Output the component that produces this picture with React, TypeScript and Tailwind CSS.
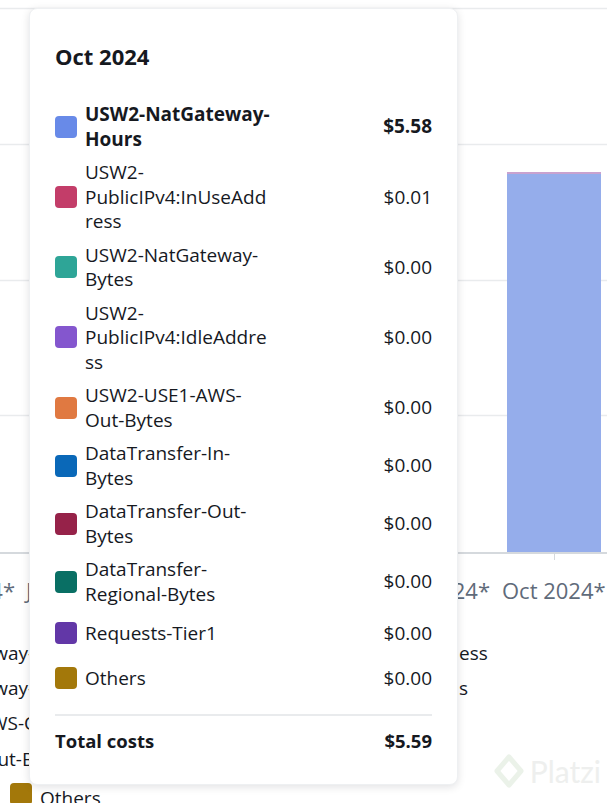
const font = { fontFamily: '"Open Sans", "Noto Sans", sans-serif' };

interface CostRow {
  lines: string[];
  color: string;
  value: string;
  bold?: boolean;
}

const rows: CostRow[] = [
  { lines: ['USW2-NatGateway-', 'Hours'], color: 'bg-[#688ae8]', value: '$5.58', bold: true },
  { lines: ['USW2-', 'PublicIPv4:InUseAdd', 'ress'], color: 'bg-[#c33d69]', value: '$0.01' },
  { lines: ['USW2-NatGateway-', 'Bytes'], color: 'bg-[#2ea597]', value: '$0.00' },
  { lines: ['USW2-', 'PublicIPv4:IdleAddre', 'ss'], color: 'bg-[#8456ce]', value: '$0.00' },
  { lines: ['USW2-USE1-AWS-', 'Out-Bytes'], color: 'bg-[#e07941]', value: '$0.00' },
  { lines: ['DataTransfer-In-', 'Bytes'], color: 'bg-[#0a68b8]', value: '$0.00' },
  { lines: ['DataTransfer-Out-', 'Bytes'], color: 'bg-[#962249]', value: '$0.00' },
  { lines: ['DataTransfer-', 'Regional-Bytes'], color: 'bg-[#096f64]', value: '$0.00' },
  { lines: ['Requests-Tier1'], color: 'bg-[#6237a7]', value: '$0.00' },
  { lines: ['Others'], color: 'bg-[#a3780a]', value: '$0.00' },
];

function ChartBackground() {
  return (
    <svg width="607" height="560" viewBox="0 0 607 560" className="block">
      {[8, 144, 280, 415].map((y) => (
        <line key={y} x1="0" x2="607" y1={y + 0.5} y2={y + 0.5} stroke="#e9ebed" strokeWidth="1.5" />
      ))}
      <rect x="507" y="172" width="94" height="380" fill="#95adeb" />
      <rect x="507" y="172" width="94" height="2" fill="#c9a2cf" />
      <line x1="0" x2="607" y1="553" y2="553" stroke="#d5d9dd" strokeWidth="2" />
      <line x1="554.5" x2="554.5" y1="554" y2="561" stroke="#d5d9dd" strokeWidth="1" />
    </svg>
  );
}

function CostTooltip() {
  return (
    <div className="absolute left-[29px] top-[8px] w-[429px] rounded-[8px] border border-[#eef0f2] bg-white px-[25px] pt-[33px] pb-[30px] shadow-[0_2px_8px_rgba(0,7,22,0.12)] text-[#16191f]">
      <div className="text-[22px] font-bold leading-[28px] mb-[32px]">Oct 2024</div>
      <div className="flex flex-col gap-[9px]">
        {rows.map((row) => (
          <div key={row.lines.join('')} className="flex min-h-[36px] items-center justify-between text-[19px] leading-[24.5px]">
            <div className="flex items-center gap-[8px]">
              <span className={`h-[22px] w-[22px] shrink-0 rounded-[4px] ${row.color}`} />
              <div className={row.bold ? 'font-bold' : ''}>
                {row.lines.map((l) => (
                  <div key={l} className="whitespace-nowrap">{l}</div>
                ))}
              </div>
            </div>
            <span className={row.bold ? 'font-bold' : ''}>{row.value}</span>
          </div>
        ))}
      </div>
      <div className="mt-[18px] border-t-2 border-[#e9ebed]" />
      <div className="mt-[13px] flex items-center justify-between text-[18.5px] font-bold leading-[24.5px]">
        <span>Total costs</span>
        <span>$5.59</span>
      </div>
    </div>
  );
}

export default function App() {
  return (
    <div className="relative h-[803px] w-[607px] overflow-hidden bg-white text-[#16191f]" style={font}>
      <ChartBackground />

      {/* x axis labels */}
      <div className="mt-[17px] grid grid-cols-[490px_1fr] text-[22px] leading-[26px] text-[#5f6b7a] whitespace-nowrap">
        <div className="flex justify-between">
          <div className="flex">
            <div className="flex w-[15px] justify-end">Jun 2024*</div>
            <span className="ml-[11px]">Jul 2024*</span>
          </div>
          <span>Sep 2024*</span>
        </div>
        <span className="pl-[12px]">Oct 2024*</span>
      </div>

      {/* legend */}
      <div className="mt-[38px] flex flex-col text-[19px] leading-[24px] whitespace-nowrap">
        <div className="grid h-[35px] grid-cols-[459px_1fr]">
          <div className="flex">
            <div className="flex w-[28px] justify-end">USW2-NatGateway</div>
            <span>-Hours</span>
          </div>
          <span>ess</span>
        </div>
        <div className="grid h-[35px] grid-cols-[459px_1fr]">
          <div className="flex">
            <div className="flex w-[28px] justify-end">USW2-NatGateway</div>
            <span>-Bytes</span>
          </div>
          <span>s</span>
        </div>
        <div className="flex h-[36px]">
          <div className="flex w-[24px] justify-end">USW2-USE1-AWS-</div>
          <span>Out-Bytes</span>
        </div>
        <div className="flex h-[36px]">
          <div className="flex w-[22px] justify-end">DataTransfer-Out-</div>
          <span>Bytes</span>
        </div>
        <div className="flex items-start gap-[8px] pl-[10px]">
          <span className="h-[22px] w-[22px] rounded-[4px] bg-[#a3780a]" />
          <span className="mt-[3px]">Others</span>
        </div>
      </div>

      <CostTooltip />

      {/* watermark */}
      <div className="absolute right-[6px] bottom-[9px] flex items-center gap-[6px] opacity-60">
        <svg width="30" height="36" viewBox="0 0 30 36">
          <path d="M15 3 L27 17 L15 31 L3 17 Z" fill="none" stroke="#dfeadc" strokeWidth="5" strokeLinejoin="round" />
        </svg>
        <span className="text-[30px] text-[#e3e6e3]" style={{ fontFamily: '"Lato", sans-serif' }}>Platzi</span>
      </div>
    </div>
  );
}
